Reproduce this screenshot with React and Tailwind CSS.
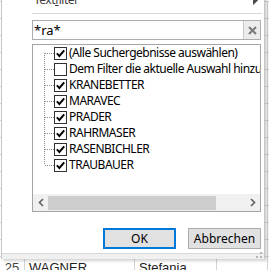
import React from "react";

const items = [
  { label: "(Alle Suchergebnisse auswählen)", checked: true },
  { label: "Dem Filter die aktuelle Auswahl hinzufügen", checked: false },
  { label: "KRANEBETTER", checked: true },
  { label: "MARAVEC", checked: true },
  { label: "PRADER", checked: true },
  { label: "RAHRMASER", checked: true },
  { label: "RASENBICHLER", checked: true },
  { label: "TRAUBAUER", checked: true },
];

const TreeLines = ({ first, last }) => (
  <svg width="21" height="16" className="shrink-0">
    <line x1="11.5" y1={first ? 8 : 0} x2="11.5" y2={last ? 8 : 16} stroke="#8a8a8a" strokeDasharray="1 1" />
    <line x1="12" y1="8.5" x2="21" y2="8.5" stroke="#8a8a8a" strokeDasharray="1 1" />
  </svg>
);

const CheckBox = ({ checked }) => (
  <svg width="13" height="13" className="shrink-0">
    <rect x="0.5" y="0.5" width="12" height="12" fill="#fff" stroke="#333" />
    {checked && <path d="M2.8 6.4l2.6 2.6 4.8-5.6" fill="none" stroke="#000" strokeWidth="2" />}
  </svg>
);

const SheetRow = ({ num }) => (
  <div className="flex h-[17px] shrink-0 border-b border-[#d4d4d4] text-[12px] text-[#222]">
    <div className="w-[25px] shrink-0 border-r border-[#d4d4d4] text-center text-[#444]">{num}</div>
    <div className="w-[110px] shrink-0 border-r border-[#d4d4d4]" />
    <div className="w-[82px] shrink-0 border-r border-[#d4d4d4]" />
    <div className="w-[51px] shrink-0 border-r border-[#d4d4d4]" />
  </div>
);

export default function App() {
  const rows = Array.from({ length: 15 }, (_, i) => 10 + i);
  return (
    <div className="relative h-[270px] w-[269px] overflow-hidden bg-white font-['Noto_Sans',sans-serif]">
      {/* sheet behind the popup */}
      <div className="flex flex-col font-['Liberation_Sans',sans-serif]">
        <div className="h-[2px] shrink-0 border-b border-[#d4d4d4]" />
        {rows.map((n) => (
          <SheetRow key={n} num={n} />
        ))}
        <div className="flex h-[20px] shrink-0 text-[13px] leading-[16px] text-[#222]">
          <div className="w-[25px] shrink-0 border-r border-[#d4d4d4] pt-[3px] text-center text-[#444]">25</div>
          <div className="w-[110px] shrink-0 border-r border-[#d4d4d4] pl-[4px] pt-[3px]">WAGNER</div>
          <div className="w-[82px] shrink-0 border-r border-[#d4d4d4] pl-[4px] pt-[3px]">Stefania</div>
          <div className="w-[51px] shrink-0 border-r border-[#d4d4d4]" />
        </div>
      </div>

      {/* filter popup */}
      <div className="absolute left-[1px] top-[-8px] flex w-[264px] flex-col border-x border-[#c6c6c6] bg-white tracking-[-0.5px] shadow-[2px_2px_3px_rgba(0,0,0,0.18)]">
        <div className="flex h-[16px] items-center justify-between pl-[32px] pr-[6px] text-[12px] leading-[16px] text-[#3c3c3c]">
          <span>
            Text<span className="underline">f</span>ilter
          </span>
          <svg width="5" height="9">
            <path d="M0 0l5 4.5L0 9z" fill="#4a4a4a" />
          </svg>
        </div>
        <div className="ml-[30px] mr-[2px] mt-[5px] h-px bg-[#d7d7d7]" />

        <div className="ml-[30px] mr-[3px] mt-[6px] flex h-[20px] border border-[#abadb3]">
          <div className="flex-1 pl-[1px] text-[13px] leading-[18px] tracking-normal text-black">*ra*</div>
          <div className="flex w-[17px] items-center justify-center border-l border-[#c8c8c8] bg-[#ececec]">
            <svg width="9" height="9">
              <path d="M1 1l7 7M8 1l-7 7" stroke="#7a7a7a" strokeWidth="2" />
            </svg>
          </div>
        </div>

        <div className="ml-[30px] mr-[3px] mt-[4px] flex h-[168px] flex-col overflow-hidden border border-[#a5a5a5]">
          <div className="flex-1">
            {items.map((it, i) => (
              <div key={it.label} className="flex h-[16px] items-center whitespace-nowrap text-[12px] text-black">
                <TreeLines first={i === 0} last={i === items.length - 1} />
                <CheckBox checked={it.checked} />
                <span className="ml-[2px]">{it.label}</span>
              </div>
            ))}
          </div>
          <div className="flex h-[17px] shrink-0 items-center bg-[#f0f0f0]">
            <div className="flex w-[15px] items-center justify-center">
              <svg width="6" height="9">
                <path d="M5 1L1.5 4.5 5 8" fill="none" stroke="#606060" strokeWidth="1.6" />
              </svg>
            </div>
            <div className="h-[14px] w-[168px] bg-[#cdcdcd]" />
            <div className="flex-1" />
            <div className="flex w-[15px] items-center justify-center">
              <svg width="6" height="9">
                <path d="M1 1l3.5 3.5L1 8" fill="none" stroke="#606060" strokeWidth="1.6" />
              </svg>
            </div>
          </div>
        </div>

        <div className="mr-[3px] mt-[16px] flex justify-end gap-[12px] text-[12px] tracking-normal text-black">
          <div className="flex h-[21px] w-[73px] items-center justify-center border-2 border-[#0078d7] bg-[#e1e1e1]">OK</div>
          <div className="flex h-[21px] w-[73px] items-center justify-center border border-[#adadad] bg-[#e1e1e1]">Abbrechen</div>
        </div>

        <div className="mt-[4px] flex h-[6px] items-end justify-end border-t border-[#dadada] bg-[#f0f0f0] pb-[1px] pr-[2px]">
          <svg width="6" height="6">
            <rect x="4" y="0" width="2" height="2" fill="#b5b5b5" />
            <rect x="0" y="4" width="2" height="2" fill="#b5b5b5" />
            <rect x="4" y="4" width="2" height="2" fill="#b5b5b5" />
          </svg>
        </div>
      </div>
    </div>
  );
}
